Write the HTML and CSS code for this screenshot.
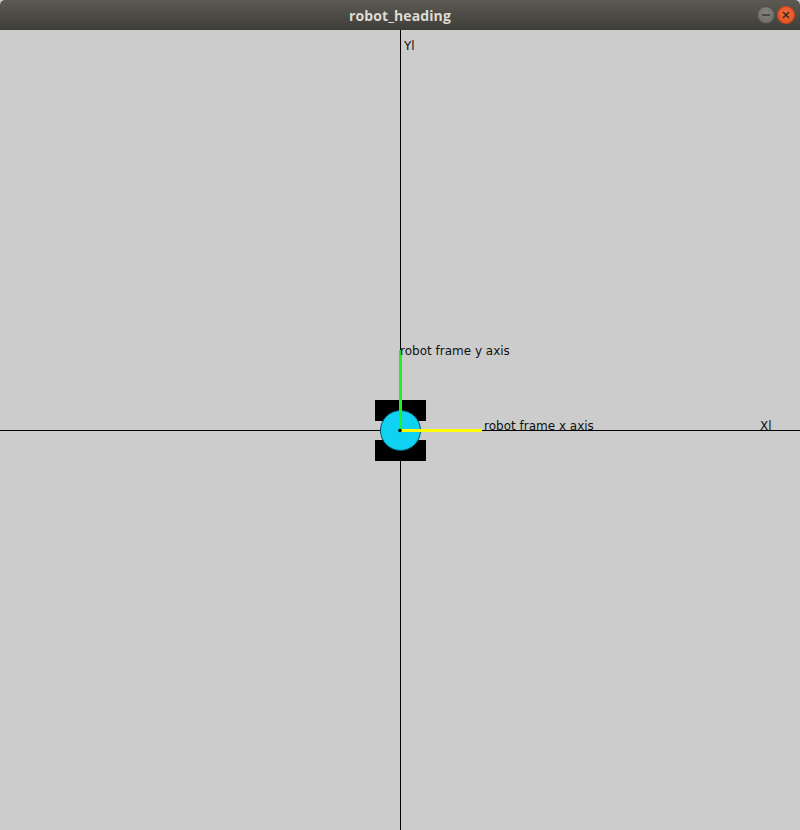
FILE: index.html
```html
<!DOCTYPE html>
<html>
<head>
<meta charset="utf-8">
<link rel="stylesheet" href="styles.css">
</head>
<body>
<div class="window">
  <div class="titlebar">
    <div class="title">robot_heading</div>
    <div class="controls">
      <span class="btn min"><svg width="18" height="18" viewBox="0 0 18 18"><line x1="5" y1="9" x2="13" y2="9" stroke="#3a3a36" stroke-width="1.5"/></svg></span>
      <span class="btn close"><svg width="18" height="18" viewBox="0 0 18 18"><path d="M6 6 L12 12 M12 6 L6 12" stroke="#3a2a20" stroke-width="1.5"/></svg></span>
    </div>
  </div>
  <div class="canvas">
    <svg class="scene" width="800" height="800" viewBox="0 0 800 800">
      <line x1="400.5" y1="0" x2="400.5" y2="800" stroke="#000" stroke-width="1"/>
      <line x1="0" y1="400.5" x2="800" y2="400.5" stroke="#000" stroke-width="1"/>
      <rect x="375" y="370" width="51" height="21" fill="#000"/>
      <rect x="375" y="410" width="51" height="21" fill="#000"/>
      <circle cx="400.5" cy="400.5" r="20" fill="#0fd2f2" stroke="#0a4a5a" stroke-width="1"/>
      <line x1="400.5" y1="320" x2="400.5" y2="400" stroke="#22f022" stroke-width="3"/>
      <line x1="401" y1="400.5" x2="482" y2="400.5" stroke="#ffff00" stroke-width="3"/>
      <circle cx="400" cy="400.5" r="1.8" fill="#000"/>
      <text class="lbl" x="400" y="325">robot frame y axis</text>
      <text class="lbl" x="484" y="400">robot frame x axis</text>
      <text class="lbl" x="404" y="20">Yl</text>
      <text class="lbl" x="760" y="400">Xl</text>
    </svg>
  </div>
</div>
</body>
</html>
```
FILE: styles.css
```css
html, body {
  margin: 0;
  padding: 0;
  background: #cccccc;
}
.window {
  width: 800px;
  height: 830px;
  display: flex;
  flex-direction: column;
}
.titlebar {
  height: 30px;
  flex: 0 0 30px;
  background: linear-gradient(#5c5a52, #3e3d39);
  border-radius: 5px 5px 0 0;
  position: relative;
  display: flex;
  align-items: center;
  justify-content: center;
}
.title {
  font-family: "Open Sans", "DejaVu Sans", sans-serif;
  font-weight: 700;
  font-size: 14px;
  color: #dfdbd2;
  letter-spacing: 0.1px;
}
.controls {
  position: absolute;
  right: 5px;
  top: 6px;
  display: flex;
  gap: 2px;
}
.btn {
  width: 18px;
  height: 18px;
  border-radius: 50%;
  display: block;
}
.btn svg { display: block; }
.min {
  background: radial-gradient(circle at 50% 40%, #85847e, #65645f);
  box-shadow: inset 0 0 0 1px #4a4944;
}
.close {
  background: radial-gradient(circle at 50% 40%, #f26a3a, #df4c1c);
  box-shadow: inset 0 0 0 1px #b8401a;
}
.canvas {
  width: 800px;
  height: 800px;
  background: #cccccc;
}
.scene { display: block; }
.lbl {
  font-family: "DejaVu Sans", sans-serif;
  font-size: 12px;
  fill: #111;
}
```
